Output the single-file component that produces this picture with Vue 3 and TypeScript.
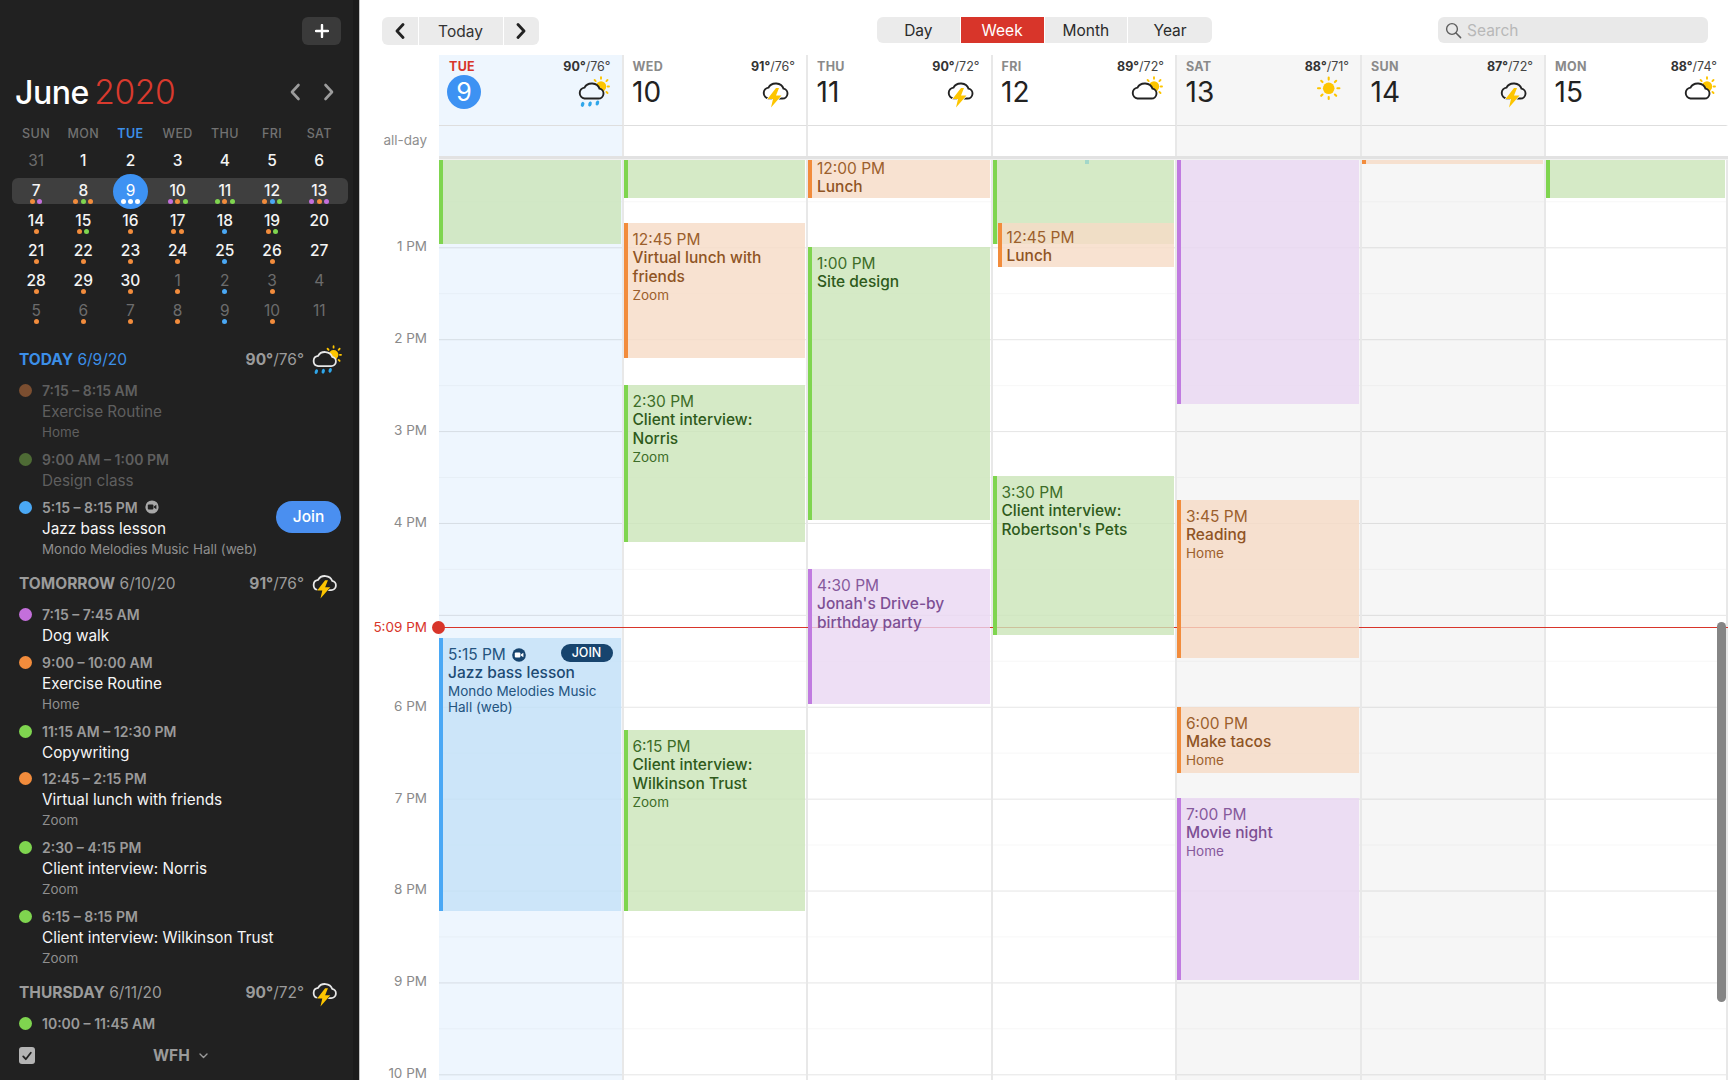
<script setup lang="ts">
// Week view of a calendar app with a dark agenda sidebar.
type Tint = "green" | "orange" | "purple" | "blue";
type Wx = "rain" | "bolt" | "partly" | "sun";

interface CalEvent {
  day: number;
  top: number;
  bottom: number;
  tint: Tint;
  time?: string;
  title?: string;
  place?: string;
  inset?: number;
  join?: boolean;
}
interface AgendaItem { color: string; time: string; title?: string; place?: string; past?: boolean; video?: boolean }
interface AgendaDay { head: string; date: string; hi: string; lo: string; wx: Wx; today?: boolean; items: AgendaItem[] }

const BODY_TOP = 160;
const G = "#7fd54f", O = "#f28c3c", P = "#c46fdb", B = "#4aa8f5", W = "#fff";

const weekdays = ["SUN", "MON", "TUE", "WED", "THU", "FRI", "SAT"];
const miniRows: { n: number; dim?: boolean; dots?: string[]; today?: boolean }[][] = [
  [{ n: 31, dim: true }, { n: 1 }, { n: 2 }, { n: 3 }, { n: 4 }, { n: 5 }, { n: 6 }],
  [
    { n: 7, dots: [O, P] }, { n: 8, dots: [O, G, O] }, { n: 9, dots: [W, W, W], today: true },
    { n: 10, dots: [P, O, G] }, { n: 11, dots: [G, O, G] }, { n: 12, dots: [O, B, G] }, { n: 13, dots: [P, O, P] },
  ],
  [
    { n: 14, dots: [O] }, { n: 15, dots: [O, G] }, { n: 16, dots: [O] }, { n: 17, dots: [O, O] },
    { n: 18, dots: [B] }, { n: 19, dots: [O, G] }, { n: 20 },
  ],
  [
    { n: 21, dots: [O] }, { n: 22, dots: [O] }, { n: 23, dots: [O] }, { n: 24, dots: [O] },
    { n: 25, dots: [B] }, { n: 26, dots: [O] }, { n: 27 },
  ],
  [
    { n: 28, dots: [O] }, { n: 29, dots: [O] }, { n: 30, dots: [O] }, { n: 1, dim: true, dots: [O] },
    { n: 2, dim: true, dots: [B] }, { n: 3, dim: true, dots: [O] }, { n: 4, dim: true },
  ],
  [
    { n: 5, dim: true, dots: [O] }, { n: 6, dim: true, dots: [O] }, { n: 7, dim: true, dots: [O] }, { n: 8, dim: true, dots: [O] },
    { n: 9, dim: true, dots: [B] }, { n: 10, dim: true, dots: [O] }, { n: 11, dim: true },
  ],
];

const agenda: AgendaDay[] = [
  {
    head: "TODAY", date: "6/9/20", hi: "90°", lo: "/76°", wx: "rain", today: true,
    items: [
      { color: "#7b4e30", time: "7:15 – 8:15 AM", title: "Exercise Routine", place: "Home", past: true },
      { color: "#4e6b35", time: "9:00 AM – 1:00 PM", title: "Design class", past: true },
      { color: B, time: "5:15 – 8:15 PM", title: "Jazz bass lesson", place: "Mondo Melodies Music Hall (web)", video: true },
    ],
  },
  {
    head: "TOMORROW", date: "6/10/20", hi: "91°", lo: "/76°", wx: "bolt",
    items: [
      { color: P, time: "7:15 – 7:45 AM", title: "Dog walk" },
      { color: O, time: "9:00 – 10:00 AM", title: "Exercise Routine", place: "Home" },
      { color: G, time: "11:15 AM – 12:30 PM", title: "Copywriting" },
      { color: O, time: "12:45 – 2:15 PM", title: "Virtual lunch with friends", place: "Zoom" },
      { color: G, time: "2:30 – 4:15 PM", title: "Client interview: Norris", place: "Zoom" },
      { color: G, time: "6:15 – 8:15 PM", title: "Client interview: Wilkinson Trust", place: "Zoom" },
    ],
  },
  {
    head: "THURSDAY", date: "6/11/20", hi: "90°", lo: "/72°", wx: "bolt",
    items: [{ color: G, time: "10:00 – 11:45 AM" }],
  },
];

const days: { label: string; num: number; hi: string; lo: string; wx: Wx; cls: string; today?: boolean }[] = [
  { label: "TUE", num: 9, hi: "90°", lo: "/76°", wx: "rain", cls: "tue", today: true },
  { label: "WED", num: 10, hi: "91°", lo: "/76°", wx: "bolt", cls: "" },
  { label: "THU", num: 11, hi: "90°", lo: "/72°", wx: "bolt", cls: "" },
  { label: "FRI", num: 12, hi: "89°", lo: "/72°", wx: "partly", cls: "" },
  { label: "SAT", num: 13, hi: "88°", lo: "/71°", wx: "sun", cls: "wkd" },
  { label: "SUN", num: 14, hi: "87°", lo: "/72°", wx: "bolt", cls: "wkd" },
  { label: "MON", num: 15, hi: "88°", lo: "/74°", wx: "partly", cls: "" },
];

const events: CalEvent[] = [
  { day: 0, top: 100, bottom: 244, tint: "green" },
  { day: 0, top: 638, bottom: 911, tint: "blue", time: "5:15 PM", title: "Jazz bass lesson", place: "Mondo Melodies Music Hall (web)", join: true },
  { day: 1, top: 100, bottom: 198, tint: "green" },
  { day: 1, top: 223, bottom: 358, tint: "orange", time: "12:45 PM", title: "Virtual lunch with friends", place: "Zoom" },
  { day: 1, top: 385, bottom: 542, tint: "green", time: "2:30 PM", title: "Client interview: Norris", place: "Zoom" },
  { day: 1, top: 730, bottom: 911, tint: "green", time: "6:15 PM", title: "Client interview: Wilkinson Trust", place: "Zoom" },
  { day: 2, top: 154, bottom: 198, tint: "orange", time: "12:00 PM", title: "Lunch" },
  { day: 2, top: 247, bottom: 520, tint: "green", time: "1:00 PM", title: "Site design" },
  { day: 2, top: 569, bottom: 704, tint: "purple", time: "4:30 PM", title: "Jonah's Drive-by birthday party" },
  { day: 3, top: 100, bottom: 244, tint: "green" },
  { day: 3, top: 223, bottom: 267, tint: "orange", time: "12:45 PM", title: "Lunch", inset: 5 },
  { day: 3, top: 476, bottom: 635, tint: "green", time: "3:30 PM", title: "Client interview: Robertson's Pets" },
  { day: 4, top: 100, bottom: 404, tint: "purple" },
  { day: 4, top: 500, bottom: 658, tint: "orange", time: "3:45 PM", title: "Reading", place: "Home" },
  { day: 4, top: 707, bottom: 773, tint: "orange", time: "6:00 PM", title: "Make tacos", place: "Home" },
  { day: 4, top: 798, bottom: 980, tint: "purple", time: "7:00 PM", title: "Movie night", place: "Home" },
  { day: 5, top: 100, bottom: 164, tint: "orange" },
  { day: 6, top: 100, bottom: 198, tint: "green" },
];

const hours = ["1 PM", "2 PM", "3 PM", "4 PM", "", "6 PM", "7 PM", "8 PM", "9 PM", "10 PM"];

function eventsFor(day: number) {
  return events.filter((e) => e.day === day);
}
function eventBox(e: CalEvent) {
  return {
    top: `${e.top - BODY_TOP}px`,
    height: `${e.bottom - e.top}px`,
    left: `${e.inset ?? 0}px`,
  };
}
</script>

<template>
  <div class="app">
    <!-- shared weather glyphs, cloud fill follows the column background -->
    <svg class="defs" width="0" height="0" aria-hidden="true">
      <symbol id="wx-cloud" viewBox="0 0 32 32">
        <path d="M6.5 22.5H20.5A5 5 0 0 0 21.5 12.6A8 7 0 0 0 6.5 11.6A5.5 5.5 0 0 0 6.5 22.5Z" fill="var(--wx-bg)" stroke="currentColor" stroke-width="1.9" />
      </symbol>
      <symbol id="wx-sunback" viewBox="0 0 32 32">
        <circle cx="23" cy="10.5" r="5.2" fill="#fdc500" />
        <g stroke="#fdc500" stroke-width="1.9" stroke-linecap="round">
          <path d="M23 1.2v1.6M29.5 4l-1.1 1.1M31 10.5h-1.3M29.5 17l-1.1-1.1M16.6 4l1.1 1.1" />
        </g>
      </symbol>
      <symbol id="wx-partly" viewBox="0 0 32 32">
        <use href="#wx-sunback" />
        <use href="#wx-cloud" />
      </symbol>
      <symbol id="wx-rain" viewBox="0 0 32 32">
        <use href="#wx-sunback" />
        <use href="#wx-cloud" />
        <g fill="#2fa6ea">
          <ellipse cx="4.6" cy="28.4" rx="1.7" ry="2.6" transform="rotate(18 4.6 28.4)" />
          <ellipse cx="12" cy="28" rx="1.7" ry="2.6" transform="rotate(18 12 28)" />
          <ellipse cx="19.4" cy="27" rx="1.7" ry="2.6" transform="rotate(18 19.4 27)" />
        </g>
      </symbol>
      <symbol id="wx-bolt" viewBox="0 0 32 32">
        <use href="#wx-cloud" />
        <path d="M14 12L5.5 23H11L9 31.5L19.5 19.5H14L17 12Z" fill="#fdc500" stroke="var(--wx-bg)" stroke-width="1.2" paint-order="stroke" />
      </symbol>
      <symbol id="wx-sun" viewBox="0 0 32 32">
        <circle cx="12.7" cy="12.3" r="5.8" fill="#fdc500" />
        <path d="M12.7 1.6v2M12.7 21v2M2 12.3h2M21.4 12.3h2M5.2 4.8l1.3 1.3M18.9 18.5l1.3 1.3M5.2 19.8l1.3-1.3M18.9 6.1l1.3-1.3" stroke="#fdc500" stroke-width="2.1" stroke-linecap="round" fill="none" />
      </symbol>
    </svg>

    <aside class="side">
      <div class="side-top">
        <button class="plus">
          <svg width="14" height="14" viewBox="0 0 14 14"><path d="M7 1v12M1 7h12" stroke="#fff" stroke-width="2.4" stroke-linecap="round" /></svg>
        </button>
      </div>

      <div class="month">
        <h1><span class="m">June</span> <span class="y">2020</span></h1>
        <div class="month-nav">
          <svg width="12" height="18" viewBox="0 0 12 18"><path d="M9.5 2L3 9l6.5 7" fill="none" stroke="#9c9c9c" stroke-width="2.6" stroke-linecap="round" stroke-linejoin="round" /></svg>
          <svg width="12" height="18" viewBox="0 0 12 18"><path d="M2.5 2L9 9l-6.5 7" fill="none" stroke="#9c9c9c" stroke-width="2.6" stroke-linecap="round" stroke-linejoin="round" /></svg>
        </div>
      </div>

      <div class="mini-head">
        <span v-for="d in weekdays" :key="d" :class="{ now: d === 'TUE' }">{{ d }}</span>
      </div>
      <div v-for="(row, i) in miniRows" :key="i" class="mini-row" :class="{ week: i === 1 }">
        <div v-for="c in row" :key="c.n" class="cell" :class="{ dim: c.dim, today: c.today }">
          <span class="num">{{ c.n }}</span>
          <span class="dots">
            <i v-for="(col, j) in c.dots" :key="j" :style="{ background: col }"></i>
          </span>
        </div>
      </div>

      <div class="agenda">
        <section v-for="a in agenda" :key="a.head" class="ag-day" :class="{ today: a.today }">
          <header class="ag-head">
            <span class="ag-date"><b>{{ a.head }}</b> {{ a.date }}</span>
            <span class="ag-temp"><b>{{ a.hi }}</b>{{ a.lo }}</span>
            <svg class="ag-wx"><use :href="`#wx-${a.wx}`" /></svg>
          </header>
          <div v-for="it in a.items" :key="it.time" class="ag-item" :class="{ past: it.past }">
            <span class="ag-dot" :style="{ background: it.color }"></span>
            <div class="ag-body">
              <div class="ag-time">
                {{ it.time }}
                <svg v-if="it.video" class="cam" width="14" height="14" viewBox="0 0 14 14">
                  <circle cx="7" cy="7" r="6.6" fill="#a8a8a8" />
                  <rect x="2.8" y="4.4" width="5.6" height="5.2" rx="1" fill="#212121" />
                  <path d="M8.8 6.5l2.6-1.7v4.4L8.8 7.5z" fill="#212121" />
                </svg>
              </div>
              <div v-if="it.title" class="ag-title">{{ it.title }}</div>
              <div v-if="it.place" class="ag-place">{{ it.place }}</div>
            </div>
            <button v-if="it.video" class="join">Join</button>
          </div>
        </section>
      </div>

      <footer class="side-foot">
        <span class="check">
          <svg width="12" height="12" viewBox="0 0 12 12"><path d="M2.2 6.4l2.6 2.8 5-6.4" fill="none" stroke="#222" stroke-width="1.8" stroke-linecap="round" stroke-linejoin="round" /></svg>
        </span>
        <span class="wfh">WFH</span>
        <svg width="9" height="6" viewBox="0 0 9 6"><path d="M1 1l3.5 3.5L8 1" fill="none" stroke="#9a9a9a" stroke-width="1.4" stroke-linecap="round" stroke-linejoin="round" /></svg>
      </footer>
    </aside>

    <main class="main">
      <div class="toolbar">
        <div class="nav-group">
          <button class="nav-arrow">
            <svg width="12" height="16" viewBox="0 0 12 16"><path d="M9 1.5L3 8l6 6.5" fill="none" stroke="#222" stroke-width="2.8" stroke-linecap="round" stroke-linejoin="round" /></svg>
          </button>
          <button class="nav-today">Today</button>
          <button class="nav-arrow">
            <svg width="12" height="16" viewBox="0 0 12 16"><path d="M3 1.5L9 8l-6 6.5" fill="none" stroke="#222" stroke-width="2.8" stroke-linecap="round" stroke-linejoin="round" /></svg>
          </button>
        </div>
        <div class="views">
          <button>Day</button>
          <button class="on">Week</button>
          <button>Month</button>
          <button>Year</button>
        </div>
        <div class="search">
          <svg width="17" height="17" viewBox="0 0 17 17"><circle cx="7" cy="7" r="5.4" fill="none" stroke="#5e5e5e" stroke-width="1.4" /><path d="M11 11l4.6 4.6" stroke="#5e5e5e" stroke-width="1.5" stroke-linecap="round" /></svg>
          <span>Search</span>
        </div>
      </div>

      <div class="grid-row head-row">
        <div></div>
        <div v-for="d in days" :key="d.label" class="day-head" :class="d.cls">
          <div class="dh-top">
            <span class="dh-label" :class="{ now: d.today }">{{ d.label }}</span>
            <span class="dh-temp"><b>{{ d.hi }}</b>{{ d.lo }}</span>
          </div>
          <div class="dh-main">
            <span class="dh-num" :class="{ now: d.today }">{{ d.num }}</span>
            <svg class="dh-wx"><use :href="`#wx-${d.wx}`" /></svg>
          </div>
        </div>
      </div>

      <div class="grid-row allday-row">
        <div class="allday-label">all-day</div>
        <div v-for="d in days" :key="d.label" class="allday-cell" :class="d.cls"></div>
      </div>
      <div class="sep"></div>

      <div class="grid-row body">
        <div class="gutter">
          <div v-for="(h, i) in hours" :key="i" class="hour">{{ h }}</div>
        </div>
        <div v-for="(d, i) in days" :key="d.label" class="col" :class="d.cls">
          <div
            v-for="(e, k) in eventsFor(i)"
            :key="k"
            class="ev"
            :class="[e.tint, { tight: e.bottom - e.top < 50 }]"
            :style="eventBox(e)"
          >
            <div v-if="e.time" class="ev-time">
              {{ e.time }}
              <svg v-if="e.join" class="ev-cam" width="14" height="14" viewBox="0 0 14 14">
                <circle cx="7" cy="7" r="6.8" fill="#17446e" />
                <rect x="2.8" y="4.4" width="5.6" height="5.2" rx="1" fill="#fff" />
                <path d="M8.8 6.5l2.6-1.7v4.4L8.8 7.5z" fill="#fff" />
              </svg>
            </div>
            <div v-if="e.title" class="ev-title">{{ e.title }}</div>
            <div v-if="e.place" class="ev-place">{{ e.place }}</div>
            <span v-if="e.join" class="ev-join">JOIN</span>
          </div>
          <span v-if="i === 3" class="speck"></span>
        </div>

        <div class="now-line">
          <span class="now-label">5:09 PM</span>
          <span class="now-dot"></span>
        </div>
        <div class="scrollbar"></div>
      </div>
    </main>
  </div>
</template>

<style scoped>
.app { display: flex; width: 1728px; height: 1080px; overflow: hidden; background: #fff; font-family: Inter, "Liberation Sans", sans-serif; color: #222; }
.defs { position: absolute; }
button { font-family: inherit; border: 0; padding: 0; }

/* sidebar */
.side { --wx-bg: #212121; flex: none; width: 360px; height: 1080px; box-sizing: border-box; display: flex; flex-direction: column; background: #212121; border-right: 1px solid #c4c4c4; box-shadow: inset -6px 0 0 #1c1c1c; color: #fff; padding-top: 17px; }
.side-top { display: flex; justify-content: flex-end; padding-right: 18px; }
.plus { width: 39px; height: 28px; background: #3a3a3a; border-radius: 6px; display: flex; align-items: center; justify-content: center; }
.month { display: flex; justify-content: space-between; align-items: center; margin-top: 27px; height: 40px; padding: 0 24px 0 15px; }
.month h1 { margin: 0; font-size: 32px; line-height: 40px; font-weight: 400; letter-spacing: -.5px; }
.month .m { font-weight: 500; }
.month .y { margin-left: -3px; font-size: 33.5px; letter-spacing: -.3px; color: #d93a2e; font-weight: 300; }
.month-nav { display: flex; gap: 22px; }
.mini-head { display: grid; grid-template-columns: repeat(7, 47.2px); margin: 12px 0 2px 12.5px; height: 20px; }
.mini-head span { text-align: center; font-size: 12.5px; line-height: 20px; font-weight: 500; letter-spacing: .4px; color: #727272; }
.mini-head .now { color: #3c8fe8; font-weight: 600; }
.mini-row { position: relative; height: 30px; display: grid; grid-template-columns: repeat(7, 47.2px); padding-left: 12.5px; }
.mini-row.week::before { content: ""; position: absolute; left: 12px; top: 2px; width: 336px; height: 26px; background: #3f3f3f; border-radius: 6px; }
.cell { position: relative; text-align: center; }
.num { position: relative; display: block; padding-top: 5px; font-size: 15.5px; line-height: 20px; font-weight: 500; color: #f4f4f4; }
.cell.dim .num { color: #6c6c6c; font-weight: 400; }
.cell.today::before { content: ""; position: absolute; left: 6px; top: -2px; width: 35px; height: 35px; border-radius: 50%; background: #3d92f3; }
.cell.today .num { color: #fff; font-weight: 400; }
.dots { position: absolute; left: 0; right: 0; top: 23px; display: flex; justify-content: center; gap: 2.4px; }
.dots i { width: 5px; height: 5px; border-radius: 50%; }

.agenda { flex: 1; min-height: 0; overflow: hidden; margin-top: 16.2px; padding: 0 18px 0 19px; }
.ag-day { padding-top: 7.3px; }
.ag-head { display: flex; align-items: center; height: 21px; margin-bottom: 10px; font-size: 15.5px; color: #9b9b9b; }
.ag-date { flex: 1; }
.ag-date b { font-weight: 700; }
.ag-day.today .ag-date { color: #3c8fe8; }
.ag-temp b { font-weight: 700; }
.ag-wx { width: 30px; height: 30px; margin: 0 -1px 0 8px; color: #e8e8e8; }
.ag-item { display: flex; align-items: flex-start; padding-bottom: 5.75px; }
.ag-dot { width: 13px; height: 13px; border-radius: 50%; margin: 4px 10px 0 0; flex: none; }
.ag-body { flex: 1; min-width: 0; line-height: 21px; }
.ag-time { display: flex; align-items: center; gap: 7px; font-size: 14px; font-weight: 600; color: #9a9a9a; }
.ag-title { font-size: 15.3px; color: #f6f6f6; }
.ag-place { font-size: 13.4px; color: #8f8f8f; }
.ag-item.past .ag-time, .ag-item.past .ag-title, .ag-item.past .ag-place { color: #5f5f5f; }
.join { flex: none; width: 65px; height: 32px; margin-top: 4px; border-radius: 16px; background: #4a8ff0; color: #fff; font-size: 15.5px; font-weight: 500; }
.side-foot { flex: none; height: 46px; box-sizing: border-box; padding: 0 0 3px 19px; display: flex; align-items: center; }
.check { width: 16px; height: 17px; border-radius: 3px; background: #b4b4b4; display: flex; align-items: center; justify-content: center; }
.wfh { margin: 0 9px 0 118px; font-size: 15.5px; font-weight: 700; color: #9a9a9a; }

/* toolbar */
.main { flex: 1; min-width: 0; display: flex; flex-direction: column; height: 1080px; }
.toolbar { flex: none; height: 55px; box-sizing: border-box; display: flex; align-items: flex-start; padding-top: 17px; }
.nav-group { display: flex; gap: 1px; margin-left: 22px; height: 28px; }
.nav-group button { height: 28px; background: #ebebeb; color: #333; display: flex; align-items: center; justify-content: center; }
.nav-arrow { width: 35.5px; }
.nav-arrow:first-child { border-radius: 6px 0 0 6px; }
.nav-arrow:last-child { border-radius: 0 6px 6px 0; }
.nav-today { width: 84px; font-size: 15.5px; }
.views { display: flex; margin-left: 338px; height: 26px; background: #ebebeb; border-radius: 6px; overflow: hidden; }
.views button { width: 83.75px; background: transparent; font-size: 15.5px; color: #2a2a2a; border-right: 1px solid #fff; }
.views button:last-child { border-right: 0; }
.views button.on { background: #d8352a; color: #fff; }
.search { margin-left: auto; margin-right: 20px; width: 270px; height: 26px; box-sizing: border-box; padding-left: 7px; background: #e9e9e9; border-radius: 6px; display: flex; align-items: center; gap: 5px; font-size: 15.5px; color: #b8b8b8; }

/* week grid */
.grid-row { display: grid; grid-template-columns: 79px 184.5px 184.5px 184.5px 184.5px 185px 184px 182px; }
.tue { background: #eef6fe; --wx-bg: #eef6fe; }
.wkd { background: #f6f6f6; --wx-bg: #f6f6f6; }
.head-row { flex: none; height: 70px; --wx-bg: #fff; }
.day-head { position: relative; box-sizing: border-box; padding: 5px 11px 0 10px; border-right: 2px solid #e8e8e8; }
.day-head:last-child { border-right-color: transparent; padding-right: 9px; }
.dh-top { display: flex; justify-content: space-between; height: 14px; line-height: 14px; }
.dh-label { font-size: 12.5px; font-weight: 700; letter-spacing: .3px; color: #8a8a8a; margin-left: -1px; }
.dh-label.now { color: #d8352a; margin-left: 0; }
.dh-temp { font-size: 12.5px; color: #444; }
.dh-temp b { font-weight: 700; color: #333; }
.dh-main { display: flex; justify-content: space-between; align-items: center; height: 32px; margin-top: 2px; }
.dh-num { font-size: 28px; line-height: 32px; color: #222; margin-left: -1.5px; }
.dh-num.now { width: 34px; height: 34px; margin-left: -2px; border-radius: 50%; background: #3d92f3; color: #fff; font-size: 25px; line-height: 34px; text-align: center; }
.dh-wx { flex: none; width: 32px; height: 32px; margin-right: 1px; color: #222; }
.allday-row { flex: none; height: 31px; }
.allday-label { text-align: right; padding-right: 12px; font-size: 13.5px; line-height: 30px; color: #8f8f8f; }
.allday-cell { box-sizing: border-box; border-top: 1px solid #dedede; border-right: 2px solid #e8e8e8; }
.allday-cell:last-child { border-right-color: transparent; }
.sep { flex: none; height: 4px; margin-left: 79px; background: linear-gradient(#e2e2e2 75%, #f2f2f2 75%); }

.body { position: relative; flex: 1; min-height: 0; overflow: hidden; }
.gutter { padding-top: 41.2px; }
.hour { height: 91.9px; line-height: 91.9px; text-align: right; padding-right: 12px; font-size: 13.5px; color: #8a8a8a; }
.col {
  position: relative;
  box-sizing: border-box;
  height: 920px;
  border-right: 2px solid #e8e8e8;
  background-image: linear-gradient(rgba(0, 0, 0, .1) 1px, transparent 1px), linear-gradient(rgba(0, 0, 0, .03) 1px, transparent 1px);
  background-size: 100% 91.9px, 100% 91.9px;
  background-position: 0 87.3px, 0 41.3px;
}
.col:last-of-type { border-right-color: transparent; }

.ev { position: absolute; right: 1px; z-index: 2; box-sizing: border-box; padding: 8px 6px 0 5px; border-left: 4px solid; overflow: hidden; font-size: 15.5px; }
.ev.tight { padding-top: 6px; }
.ev-time { display: flex; align-items: center; gap: 6px; line-height: 17px; }
.ev-title { line-height: 19px; font-weight: 500; }
.ev-place { font-size: 13.5px; line-height: 16px; margin-top: .5px; }
.ev-join { position: absolute; top: 6px; right: 8px; width: 52px; height: 18px; border-radius: 9px; background: #17446e; color: #fff; font-size: 12.5px; font-weight: 500; line-height: 18px; text-align: center; }
.ev-cam { flex: none; }
.green { background: rgba(202, 229, 184, .8); border-color: #7fd54f; color: #3d6d28; }
.green .ev-title { color: #2e5a1b; }
.orange { background: rgba(246, 219, 197, .8); border-color: #f28c3c; color: #9c5f2c; }
.orange .ev-title { color: #8f5424; }
.purple { background: rgba(234, 215, 242, .8); border-color: #c07be0; color: #86599c; }
.purple .ev-title { color: #7d4f94; }
.blue { background: rgba(195, 225, 247, .8); border-color: #4aa8f5; color: #245480; }
.blue .ev-title { color: #1d4a73; }
.speck { position: absolute; z-index: 3; top: 0; left: 92px; width: 4px; height: 4px; background: #a3d7c9; }

.now-line { position: absolute; z-index: 1; left: 79px; right: 0; top: 467px; height: 1px; background: #d8352a; }
.now-dot { position: absolute; left: -7.5px; top: -6px; width: 13px; height: 13px; border-radius: 50%; background: #d8352a; }
.now-label { position: absolute; right: 100%; margin-right: 12px; top: -10px; line-height: 21px; font-size: 13.5px; color: #d8352a; white-space: nowrap; }
.scrollbar { position: absolute; z-index: 3; right: 2px; top: 462px; width: 9px; height: 380px; border-radius: 5px; background: #858585; }
</style>

<style>
html, body { margin: 0; overflow: hidden; background: #fff; }
</style>
